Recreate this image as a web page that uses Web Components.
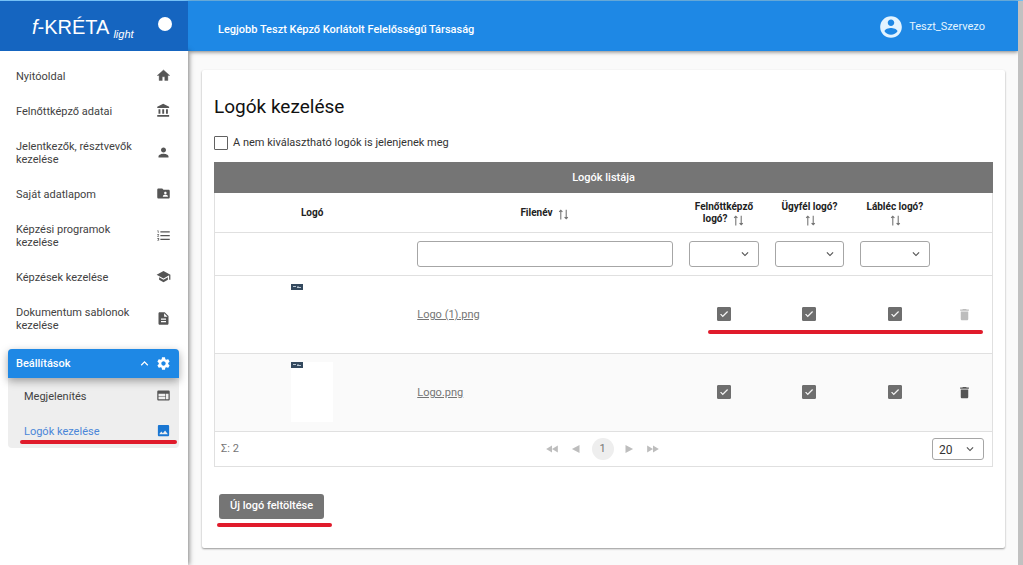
<!DOCTYPE html>
<html lang="hu">
<head>
<meta charset="utf-8">
<meta name="viewport" content="width=device-width, initial-scale=1">
<title>f-KRÉTA light – Logók kezelése</title>
<style>
  body { margin: 0; font: 11px/14px Roboto, "Liberation Sans", sans-serif; color: #333; background: #fafafa; }
</style>
</head>
<body>
<kreta-app>
  <kreta-brand slot="brand"></kreta-brand>
  <kreta-topbar slot="topbar" user="Teszt_Szervezo">Legjobb Teszt Képző Korlátolt Felelősségű Társaság</kreta-topbar>
  <kreta-nav slot="nav">
    <nav-item icon="home">Nyitóoldal</nav-item>
    <nav-item icon="bank">Felnőttképző adatai</nav-item>
    <nav-item icon="person">Jelentkezők, résztvevők kezelése</nav-item>
    <nav-item icon="folder">Saját adatlapom</nav-item>
    <nav-item icon="list">Képzési programok kezelése</nav-item>
    <nav-item icon="school">Képzések kezelése</nav-item>
    <nav-item icon="doc">Dokumentum sablonok kezelése</nav-item>
    <nav-group label="Beállítások">
      <nav-item icon="web" sub>Megjelenítés</nav-item>
      <nav-item icon="image" sub active>Logók kezelése</nav-item>
    </nav-group>
  </kreta-nav>
  <content-card heading="Logók kezelése">
    <k-check label="A nem kiválasztható logók is jelenjenek meg" show-label></k-check>
    <logo-table></logo-table>
    <upload-action slot="actions">Új logó feltöltése</upload-action>
  </content-card>
</kreta-app>

<script>
const ICONS = {
  home: '<path d="M10 20v-6h4v6h5v-8h3L12 3 2 12h3v8z" stroke="currentColor" stroke-width=".6"/>',
  bank: '<path d="M4 10v7h3v-7H4zm6 0v7h3v-7h-3zM2 22h19v-3H2v3zm14-12v7h3v-7h-3zM11.500 1L2 6v2h19V6l-9.500-5z"/>',
  person: '<path d="M12 12c2.210 0 4-1.790 4-4s-1.790-4-4-4-4 1.790-4 4 1.790 4 4 4zm0 2c-2.670 0-8 1.340-8 4v2h16v-2c0-2.660-5.330-4-8-4z"/>',
  folder: '<path d="M20 6h-8l-2-2H4c-1.100 0-2 .9-2 2v12c0 1.100.9 2 2 2h16c1.100 0 2-.9 2-2V8c0-1.100-.9-2-2-2zm-5 3c1.100 0 2 .9 2 2s-.9 2-2 2-2-.9-2-2 .9-2 2-2zm4 8h-8v-1c0-1.330 2.670-2 4-2s4 .67 4 2v1z"/>',
  list: '<path d="M2 17h2v.5H3v1h1v.5H2v1h3v-4H2v1zm1-9h1V4H2v1h1v3zm-1 3h1.800L2 13.100v.9h3v-1H3.200L5 10.900V10H2v1zm5-6v2h15V5H7zm0 14h15v-2H7v2zm0-6h15v-2H7v2z"/>',
  school: '<path d="M5 13.180v4L12 21l7-3.820v-4L12 17l-7-3.820zM12 3L1 9l11 6 9-4.910V17h2V9L12 3z"/>',
  doc: '<path d="M14 2H6c-1.100 0-2 .9-2 2v16c0 1.100.9 2 2 2h12c1.100 0 2-.9 2-2V8l-6-6zm2 16H8v-2h8v2zm0-4H8v-2h8v2zm-3-5V3.500L18.500 9H13z"/>',
  gear: '<path d="M19.430 12.980c.04-.32.07-.64.07-.98s-.03-.66-.07-.98l2.110-1.650c.19-.15.24-.42.12-.64l-2-3.460c-.12-.22-.39-.3-.61-.22l-2.490 1c-.52-.4-1.080-.73-1.690-.98l-.38-2.650C14.460 2.180 14.250 2 14 2h-4c-.25 0-.46.18-.49.42l-.38 2.650c-.61.25-1.170.59-1.690.98l-2.490-1c-.23-.09-.49 0-.61.22l-2 3.460c-.13.22-.07.49.12.64l2.110 1.650c-.04.32-.07.65-.07.98s.03.66.07.98l-2.110 1.650c-.19.15-.24.42-.12.64l2 3.460c.12.22.39.3.61.22l2.490-1c.52.4 1.080.73 1.690.98l.38 2.650c.03.24.24.42.49.42h4c.25 0 .46-.18.49-.42l.38-2.650c.61-.25 1.170-.59 1.690-.98l2.490 1c.23.09.49 0 .61-.22l2-3.460c.12-.22.07-.49-.12-.64l-2.110-1.650zM12 15.500c-1.930 0-3.500-1.570-3.500-3.500s1.570-3.500 3.500-3.500 3.500 1.570 3.500 3.500-1.570 3.500-3.500 3.500z"/>',
  web: '<path d="M20 4H4c-1.100 0-2 .9-2 2v12c0 1.100.9 2 2 2h16c1.100 0 2-.9 2-2V6c0-1.100-.9-2-2-2zm-5 14H4v-4h11v4zm0-5H4V9h11v4zm5 5h-4V9h4v9z"/>',
  image: '<path d="M21 19V5c0-1.100-.9-2-2-2H5c-1.100 0-2 .9-2 2v14c0 1.100.9 2 2 2h14c1.100 0 2-.9 2-2zM8.500 13.500l2.500 3.010L14.500 12l4.500 6H5l3.500-4.500z"/>',
  up: '<path d="M12 8l-6 6 1.410 1.410L12 10.830l4.590 4.580L18 14z"/>',
  down: '<path d="M16.590 8.590L12 13.170 7.410 8.590 6 10l6 6 6-6z"/>',
  account: '<path d="M12 2C6.480 2 2 6.480 2 12s4.480 10 10 10 10-4.480 10-10S17.520 2 12 2zm0 3c1.660 0 3 1.340 3 3s-1.340 3-3 3-3-1.340-3-3 1.340-3 3-3zm0 14.200c-2.500 0-4.710-1.280-6-3.220.03-1.990 4-3.080 6-3.080 1.990 0 5.970 1.090 6 3.080-1.290 1.940-3.500 3.220-6 3.220z"/>',
  trash: '<path d="M6 19c0 1.100.9 2 2 2h8c1.100 0 2-.9 2-2V7H6v12zM19 4h-3.500l-1-1h-5l-1 1H5v2h14V4z"/>',
  check: '<path d="M9 16.170L4.830 12l-1.420 1.410L9 19 21 7l-1.410-1.410z" stroke="currentColor"/>',
  sort: '<path d="M7 21V4M4 7l3-3 3 3M17 3v17M14 17l3 3 3-3" fill="none" stroke="currentColor" stroke-width="2"/>',
  first: '<path d="M12 6v12L2 12zM22 6v12l-10-6z"/>',
  prev: '<path d="M18 5v14L5 12z"/>',
  next: '<path d="M6 5v14l13-7z"/>',
  last: '<path d="M2 6v12l10-6zM12 6v12l10-6z"/>'
};

/* Registers an element whose shadow root is filled from the given markup. */
function define(name, render) {
  customElements.define(name, class extends HTMLElement {
    constructor() { super(); this.attachShadow({ mode: 'open' }); }
    connectedCallback() {
      const t = document.createElement('template');
      t.innerHTML = render(this);
      this.shadowRoot.replaceChildren(t.content.cloneNode(true));
    }
  });
}

define('k-icon', el => `
  <style>
    :host { display: inline-block; width: 15px; height: 15px; flex: none; }
    svg { display: block; width: 100%; height: 100%; fill: currentColor; }
  </style>
  <svg viewBox="0 0 24 24" aria-hidden="true">${ICONS[el.getAttribute('name')]}</svg>`);

/* Hand-marked red underline; its host places it. */
define('red-mark', () => `
  <style>:host { display: block; position: absolute; height: 4px; border-radius: 2px; background: #e01b2b; pointer-events: none; }</style>`);

define('kreta-app', () => `
  <style>
    :host { display: grid; grid-template-columns: 188px 1fr 5px; grid-template-rows: 50px 1fr; min-height: 100vh; box-sizing: border-box; border-top: 1px solid #74c0f5; }
    .top { display: grid; grid-column: 2; z-index: 1; }
    .brand { display: grid; z-index: 3; }
    aside { grid-column: 1; grid-row: 2; background: #fff; box-shadow: 1px 0 5px rgba(0,0,0,.5); z-index: 2; }
    main { grid-column: 2; grid-row: 2; padding: 19px 13px 17px 14px; background: #fafafa; }
    .track { grid-column: 3; grid-row: 1 / 3; background: #c1c1c1; z-index: 1; }
  </style>
  <div class="brand"><slot name="brand"></slot></div>
  <div class="top"><slot name="topbar"></slot></div>
  <aside><slot name="nav"></slot></aside>
  <main><slot></slot></main>
  <div class="track"></div>`);

define('kreta-brand', () => `
  <style>
    :host { display: flex; align-items: flex-start; justify-content: space-between; box-sizing: border-box; padding: 13px 16px 0 32px; background: #1565c0; color: #fff; font-family: "Liberation Sans", sans-serif; }
    a { display: grid; grid-template-columns: auto auto; align-items: start; gap: 4px; color: inherit; text-decoration: none; font-size: 20px; line-height: 26px; }
    small { padding-top: 13px; font-size: 11px; line-height: 14px; font-style: italic; }
    .dot { width: 14px; height: 14px; margin-top: 3px; border-radius: 50%; background: #fff; }
  </style>
  <a href="#"><span><i>f</i>-KRÉTA</span><small>light</small></a><span class="dot"></span>`);

define('kreta-topbar', el => `
  <style>
    :host { display: flex; align-items: center; justify-content: space-between; padding: 2px 33px 0 30px; background: #1e88e5; box-shadow: 0 1px 4px rgba(0,0,0,.5); color: #fff; }
    .org { padding-top: 6px; font-weight: 500; }
    a { display: flex; align-items: center; gap: 5px; color: #e3f4ff; text-decoration: none; }
    k-icon { width: 26px; height: 26px; }
  </style>
  <span class="org"><slot></slot></span>
  <a href="#"><k-icon name="account"></k-icon>${el.getAttribute('user')}</a>`);

define('kreta-nav', () => `
  <style>:host { display: block; padding: 7px 9px 16px 8px; } nav { display: block; }</style>
  <nav aria-label="Főmenü"><slot></slot></nav>`);

define('nav-item', el => `
  <style>
    :host { display: block; position: relative; }
    a { display: flex; align-items: center; justify-content: space-between; padding: 10px 8px; color: #424242; text-decoration: none; }
    .text { width: 124px; padding: 2px 0 0; line-height: 13px; }
    :host { line-height: 13px; }
    k-icon { color: #555; }
    :host([sub]) a { padding-left: 16px; }
    :host([active]) .text { color: #4a86d8; }
    :host([active]) k-icon { color: #1976d2; }
    red-mark { left: 12px; right: 2px; bottom: 4px; }
  </style>
  <a href="#"><span class="text"><slot></slot></span><k-icon name="${el.getAttribute('icon')}"></k-icon></a>
  ${el.hasAttribute('active') ? '<red-mark></red-mark>' : ''}`);

define('nav-group', el => `
  <style>
    :host { display: block; margin-top: 7px; border-radius: 4px; background: #eee; }
    button { display: flex; align-items: center; width: 100%; height: 29px; gap: 4px; padding: 0 8px; border: 0; border-radius: 4px 4px 0 0; background: #1e88e5; color: #fff; font: inherit; font-weight: 500; text-align: left; box-shadow: 0 3px 8px rgba(0,0,0,.35); }
    span { flex: 1; }
  </style>
  <button type="button" aria-expanded="true"><span>${el.getAttribute('label')}</span><k-icon name="up"></k-icon><k-icon name="gear"></k-icon></button>
  <slot></slot>`);

define('content-card', el => `
  <style>
    :host { display: block; padding: 25px 12px 22px; background: #fff; border-radius: 2px; box-shadow: 0 1px 2px rgba(0,0,0,.4); }
    h1 { margin: 0 0 17px; font-size: 19px; line-height: 24px; font-weight: 400; color: #111; }
    footer { padding: 27px 5px 0; }
  </style>
  <h1>${el.getAttribute('heading')}</h1>
  <slot></slot>
  <footer><slot name="actions"></slot></footer>`);

define('k-check', el => `
  <style>
    :host { display: inline-flex; vertical-align: middle; }
    :host([show-label]) { display: flex; margin-bottom: 12px; }
    label { display: flex; align-items: center; gap: 5px; }
    .box { display: grid; }
    .box > * { grid-area: 1 / 1; place-self: center; }
    input { appearance: none; width: 14px; height: 14px; margin: 0; box-sizing: border-box; border: 1px solid #616161; border-radius: 1px; background: #fff; }
    input:checked { background: #6e6e6e; border-color: #6e6e6e; }
    k-icon { width: 10px; height: 10px; color: #fff; pointer-events: none; }
  </style>
  <label><span class="box"><input type="checkbox" ${el.hasAttribute('checked') ? 'checked' : ''} ${el.hasAttribute('show-label') ? '' : `aria-label="${el.getAttribute('label')}"`}><k-icon name="check"></k-icon></span>${el.hasAttribute('show-label') ? el.getAttribute('label') : ''}</label>`);

define('k-select', el => `
  <style>
    :host { display: grid; height: 26px; font-size: 12px; }
    :host([compact]) { height: 22px; width: 52px; }
    select { grid-area: 1 / 1; appearance: none; width: 100%; height: 100%; margin: 0; padding: 2px 6px 0; box-sizing: border-box; border: 1px solid #a6a6a6; border-radius: 3px; background: #fff; color: #333; font: inherit; }
    k-icon { grid-area: 1 / 1; place-self: center end; margin-right: 7px; width: 14px; height: 14px; color: #555; pointer-events: none; }
  </style>
  <select aria-label="${el.getAttribute('label')}"><option>${el.getAttribute('value') || ''}</option></select><k-icon name="down"></k-icon>`);

define('logo-thumb', () => `
  <style>
    :host { display: block; width: 42px; height: 60px; margin: 0 auto; background: #fff; }
    svg { display: block; width: 12px; height: 6px; }
  </style>
  <svg viewBox="0 0 12 6" role="img" aria-label="Logó"><path fill="#34495e" d="M0 0h12v6H0z"/><path stroke="#b8c6d2" d="M2 2.500h3M6 3.500h4M7 2v2"/></svg>`);

const files = [{ name: 'Logo (1).png', locked: true }, { name: 'Logo.png' }];
const flags = ['Felnőttképző logó?', 'Ügyfél logó?', 'Lábléc logó?'];

define('logo-table', () => `
  <style>
    :host { display: block; border: 1px solid #e0e0e0; border-top: 0; }
    table { width: 100%; table-layout: fixed; border-collapse: collapse; }
    caption { height: 31px; line-height: 31px; margin: 0 -1px; background: #757575; color: #fff; font-weight: 500; }
    th, td { padding: 0 8px; border-bottom: 1px solid #e0e0e0; box-sizing: border-box; text-align: center; }
    th { height: 39px; padding-top: 1px; font-size: 10px; line-height: 12px; font-weight: 700; color: #222; }
    th k-icon { width: 13px; height: 13px; margin: -2px 0 -2px 2px; vertical-align: -3px; color: #757575; }
    .filters td { height: 43px; }
    .filters input { display: block; width: 100%; height: 26px; margin: 0; box-sizing: border-box; border: 1px solid #a6a6a6; border-radius: 3px; font: inherit; }
    .file td { height: 78px; }
    .file:last-child { background: #fafafa; }
    .file .name { text-align: left; padding-top: 2px; }
    .name a { color: #757575; }
    .mark { position: relative; }
    red-mark { left: 27px; width: 275px; top: 54px; }
    td button { padding: 0; border: 0; background: none; color: #555; line-height: 0; vertical-align: middle; }
    td button:disabled { color: #bdbdbd; }
    .pager { display: grid; grid-template-columns: 1fr auto 1fr; align-items: center; height: 34px; padding: 0 8px 0 6px; color: #757575; }
    .pages { display: flex; align-items: center; gap: 7px; }
    .pages button { display: grid; place-items: center; padding: 0; width: 17px; height: 17px; border: 0; background: none; color: #bdbdbd; }
    .pages k-icon { width: 14px; height: 14px; }
    .pages .current { width: 22px; height: 22px; border-radius: 50%; background: #eee; color: #757575; font: inherit; }
    k-select[compact] { justify-self: end; }
  </style>
  <table>
    <caption>Logók listája</caption>
    <colgroup><col style="width:25%"><col style="width:35%"><col style="width:11%"><col style="width:11%"><col style="width:11%"><col style="width:7%"></colgroup>
    <thead>
      <tr><th scope="col">Logó</th><th scope="col">Filenév <k-icon name="sort"></k-icon></th>${flags.map(f => `<th scope="col">${f} <k-icon name="sort"></k-icon></th>`).join('')}<th></th></tr>
      <tr class="filters"><td></td><td><input type="text" aria-label="Filenév"></td>${flags.map(f => `<td><k-select label="${f}"></k-select></td>`).join('')}<td></td></tr>
    </thead>
    <tbody>${files.map(r => `
      <tr class="file"><td><logo-thumb></logo-thumb></td><td class="name"><a href="#">${r.name}</a></td>${flags.map((f, i) => `<td${i === 0 ? ' class="mark"' : ''}><k-check checked label="${f}"></k-check>${i === 0 && r.locked ? '<red-mark></red-mark>' : ''}</td>`).join('')}<td><button type="button" aria-label="Törlés" ${r.locked ? 'disabled' : ''}><k-icon name="trash"></k-icon></button></td></tr>`).join('')}
    </tbody>
  </table>
  <div class="pager">
    <span>Σ: 2</span>
    <div class="pages">
      <button type="button" aria-label="Első"><k-icon name="first"></k-icon></button>
      <button type="button" aria-label="Előző"><k-icon name="prev"></k-icon></button>
      <button type="button" class="current">1</button>
      <button type="button" aria-label="Következő"><k-icon name="next"></k-icon></button>
      <button type="button" aria-label="Utolsó"><k-icon name="last"></k-icon></button>
    </div>
    <k-select compact label="Sorok száma" value="20"></k-select>
  </div>`);

define('upload-action', () => `
  <style>
    :host { display: inline-block; position: relative; padding-bottom: 7px; }
    button { display: block; height: 25px; padding: 0 11px; border: 0; border-radius: 3px; background: #757575; color: #fff; font: inherit; font-weight: 500; }
    red-mark { left: -2px; right: -8px; bottom: -1px; }
  </style>
  <button type="button"><slot></slot></button><red-mark></red-mark>`);
</script>
</body>
</html>
